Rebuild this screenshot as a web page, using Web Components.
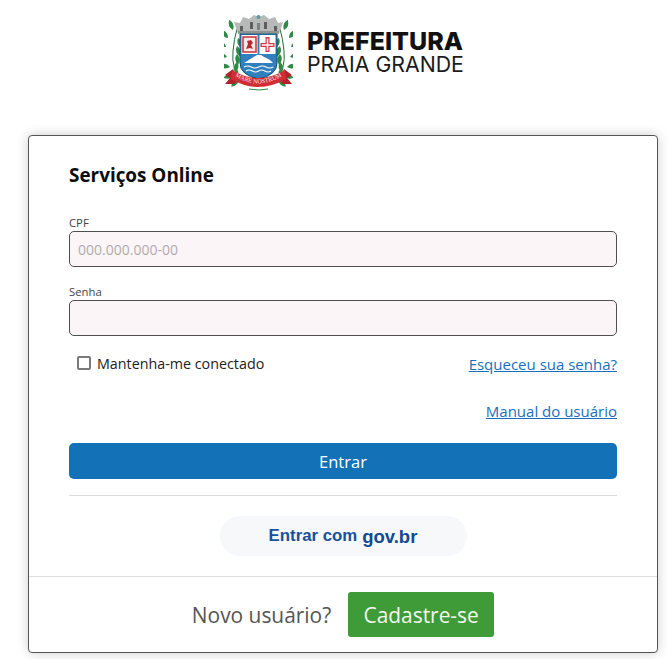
<!DOCTYPE html>
<html lang="pt-BR">
<head>
<meta charset="utf-8">
<title>Serviços Online</title>
<style>
  html, body { margin: 0; padding: 0; background: #fff; overflow: hidden; }
  body { font-family: "Open Sans", "Noto Sans", sans-serif; }
</style>
</head>
<body>
<pg-page>
  <pg-logo slot="logo"></pg-logo>
  <pg-login slot="card"></pg-login>
</pg-page>

<script>
class PgPage extends HTMLElement {
  constructor() {
    super();
    this.attachShadow({ mode: "open" });
    this.shadowRoot.innerHTML = `
      <style>
        :host { display: block; width: 668px; height: 659px; box-sizing: border-box; padding: 13px 10px 0 28px; }
        .top { display: flex; justify-content: center; height: 122px; padding-left: 2px; }
      </style>
      <div class="top"><slot name="logo"></slot></div>
      <slot name="card"></slot>
    `;
  }
}

// folhas do louro, na ordem de baixo para cima (lado esquerdo)
const LEAVES = [
  [15, 66, 135], [10, 62, 165], [14, 57, 115], [6, 54, 190], [13, 49, 100],
  [3, 44, 200], [13, 41, 85], [2, 34, 215], [13, 33, 75], [4, 25, 230], [14, 25, 70], [9, 17, 250],
];

function laurel() {
  const leaves = LEAVES.map(([x, y, a]) =>
    `<path transform="translate(${x} ${y}) rotate(${a})" d="M0 0 Q5 -4.500 11 0 Q5 4.500 0 0Z" fill="#2f8a45"/>`
  ).join("");
  return `<path d="M18 68 Q7 56 9 38 Q10 26 13 16" fill="none" stroke="#1f6d35" stroke-width="1"/>${leaves}`;
}

class PgLogo extends HTMLElement {
  constructor() {
    super();
    this.attachShadow({ mode: "open" });
    this.shadowRoot.innerHTML = `
      <style>
        :host { display: flex; align-items: flex-start; gap: 14px; width: 240px; height: 80px; }
        svg { display: block; }
        .crest { flex: none; }
        .words { display: flex; flex-direction: column; padding-top: 17px; color: #111; font-family: "Inter", "Liberation Sans", sans-serif; white-space: nowrap; }
        .a { font-size: 25px; font-weight: 800; line-height: 23px; }
        .b { font-size: 21.300px; font-weight: 400; line-height: 23px; color: #1c1c1c; }
      </style>
      <svg class="crest" width="69" height="78" viewBox="0 0 69 78">
        <defs><path id="arc" d="M9 62 Q34 79 60 62"/></defs>
        <!-- louros -->
        ${laurel()}
        <g transform="matrix(-1 0 0 1 69 0)">${laurel()}</g>
        <!-- coroa -->
        <path d="M14 21 L10 9 L16 10 L19 4 L25 6 L30 2 L35 4 L40 2 L45 6 L51 4 L54 10 L59 9 L55 21 Z" fill="#b7bab9"/>
        <path d="M16 13 h3 v5 h-3z M26 9 h3 v7 h-3z M40 9 h3 v7 h-3z M50 13 h3 v5 h-3z" fill="#5c5f5f"/>
        <path d="M33 10 h3 v7 h-3z" fill="#7d8282"/>
        <circle cx="34.500" cy="4" r="2" fill="#5a9a9a"/>
        <rect x="14" y="18" width="41" height="2.500" fill="#8f9392"/>
        <!-- escudo -->
        <path d="M16 21 H53 V50 Q53 62 34.500 66 Q16 62 16 50 Z" fill="#2f80bd" stroke="#174a72" stroke-width="1"/>
        <rect x="17.500" y="22" width="16" height="19" fill="#fff"/>
        <rect x="35.500" y="22" width="16" height="19" fill="#fff"/>
        <rect x="19" y="24" width="13" height="15" fill="#fbeaea" stroke="#c8323a" stroke-width="1.500"/>
        <path d="M22 36 l2 -5 l-1 -3 l4 -1 l2 3 l-2 2 l2 4 l-3 -1 z" fill="#b9272f"/>
        <path d="M41.500 24 h4 v6 h5 v4 h-5 v5 h-4 v-5 h-5 v-4 h5z" fill="#d4343c"/>
        <path d="M42.700 25.500 h1.600 v5.700 h5 v1.600 h-5 v5 h-1.600 v-5 h-5 v-1.600 h5z" fill="#fff"/>
        <path d="M20 50 L33 42 Q37 41 40 44 Q46 46 49 50 Z" fill="#fff"/>
        <path d="M20 54 q4 -2 7.300 0 t7.300 0 t7.300 0 t7.300 0 M22 58 q3 -2 6.300 0 t6.300 0 t6.300 0 t6 0" fill="none" stroke="#fff" stroke-width="1.100"/>
        <!-- faixa -->
        <path d="M9 56 L1 62 L6 65 L1 71 L11 71 L13 65 Z" fill="#b3232c"/>
        <path d="M60 56 L68 62 L63 65 L68 71 L58 71 L56 65 Z" fill="#b3232c"/>
        <path d="M8 57 Q34 73 61 57 L62 66 Q34 82 7 66 Z" fill="#cf2e37"/>
        <path d="M25 76 q10 2 19 0" stroke="#2f8a45" stroke-width="1" fill="none"/>
        <text font-family="Liberation Serif, serif" font-size="6.200" fill="#fde9e9" text-anchor="middle"><textPath href="#arc" startOffset="50%">MARE NOSTRUM</textPath></text>
      </svg>
      <div class="words"><span class="a">PREFEITURA</span><span class="b">PRAIA GRANDE</span></div>
    `;
  }
}

class PgField extends HTMLElement {
  constructor() {
    super();
    this.attachShadow({ mode: "open" });
    const placeholder = this.getAttribute("placeholder") || "";
    this.shadowRoot.innerHTML = `
      <style>
        :host { display: block; }
        label { display: block; font-size: 11.300px; line-height: 14px; color: #444; margin-bottom: 1px; }
        .box {
          box-sizing: border-box; height: 36px; border: 1px solid #4f4f4f; border-radius: 5px;
          background: #fcf5f7; padding: 0 8px; display: flex; align-items: center;
          font-size: 14px; color: #b0acad;
        }
      </style>
      <label><slot></slot></label>
      <div class="box">${placeholder}</div>
    `;
  }
}

class PgLink extends HTMLElement {
  constructor() {
    super();
    this.attachShadow({ mode: "open" });
    this.shadowRoot.innerHTML = `
      <style>
        :host { display: inline-block; font-size: 15px; line-height: 20px; color: #1a6fbd; text-decoration: underline; white-space: nowrap; }
      </style>
      <slot></slot>
    `;
  }
}

class PgLogin extends HTMLElement {
  constructor() {
    super();
    this.attachShadow({ mode: "open" });
    this.shadowRoot.innerHTML = `
      <style>
        :host {
          display: block; box-sizing: border-box; width: 630px; height: 518px;
          border: 1px solid #555; border-radius: 4px; background: #fff;
          box-shadow: 0 0 12px rgba(0,0,0,.2); font-size: 14px;
        }
        .body { padding: 26px 40px 0; }
        h1 { margin: 0; font-size: 18.900px; line-height: 26px; font-weight: 700; color: #0d0d0d; }
        .cpf { margin-top: 28px; }
        .senha { margin-top: 18px; }
        .row { display: flex; justify-content: space-between; align-items: center; margin-top: 18px; height: 20px; }
        .keep { display: flex; align-items: center; gap: 6px; padding-left: 8px; color: #222; font-size: 14.300px; position: relative; top: -1px; }
        .check { width: 14px; height: 14px; box-sizing: border-box; border: 2px solid #7a7a7a; border-radius: 2px; background: #fff; }
        .manual { display: flex; justify-content: flex-end; margin-top: 27px; }
        .enter {
          margin-top: 22px; height: 36px; border-radius: 5px; background: #1271b7; color: #fff;
          display: flex; align-items: center; justify-content: center; font-size: 16.500px;
        }
        hr { border: 0; border-top: 1px solid #dcdcdc; margin: 16px 0 20px; }
        .gov {
          width: 247px; height: 40px; margin: 0 auto; border-radius: 20px; background: #f7f8fa;
          display: flex; align-items: center; justify-content: center; gap: 5px;
          color: #17509b; font-family: "Liberation Sans", sans-serif; font-weight: 700; font-size: 16.800px;
        }
        .gov b { font-size: 18.500px; color: #124a94; position: relative; top: 1px; }
        .foot {
          margin-top: 20px; border-top: 1px solid #dedede; height: 76px; box-sizing: border-box;
          display: flex; align-items: center; justify-content: center; gap: 17px;
        }
        .new { font-size: 20.900px; color: #555; }
        .signup {
          height: 45px; width: 146px; border-radius: 3px; background: #3f9b38; color: #f2f8ef;
          display: flex; align-items: center; justify-content: center; font-size: 20.900px;
        }
      </style>
      <div class="body">
        <h1>Serviços Online</h1>
        <pg-field class="cpf" placeholder="000.000.000-00">CPF</pg-field>
        <pg-field class="senha">Senha</pg-field>
        <div class="row">
          <div class="keep"><span class="check"></span><span>Mantenha-me conectado</span></div>
          <pg-link>Esqueceu sua senha?</pg-link>
        </div>
        <div class="manual"><pg-link>Manual do usuário</pg-link></div>
        <div class="enter">Entrar</div>
        <hr>
        <div class="gov"><span>Entrar com</span><b>gov.br</b></div>
      </div>
      <div class="foot"><span class="new">Novo usuário?</span><span class="signup">Cadastre-se</span></div>
    `;
  }
}

customElements.define("pg-page", PgPage);
customElements.define("pg-logo", PgLogo);
customElements.define("pg-field", PgField);
customElements.define("pg-link", PgLink);
customElements.define("pg-login", PgLogin);
</script>
</body>
</html>
